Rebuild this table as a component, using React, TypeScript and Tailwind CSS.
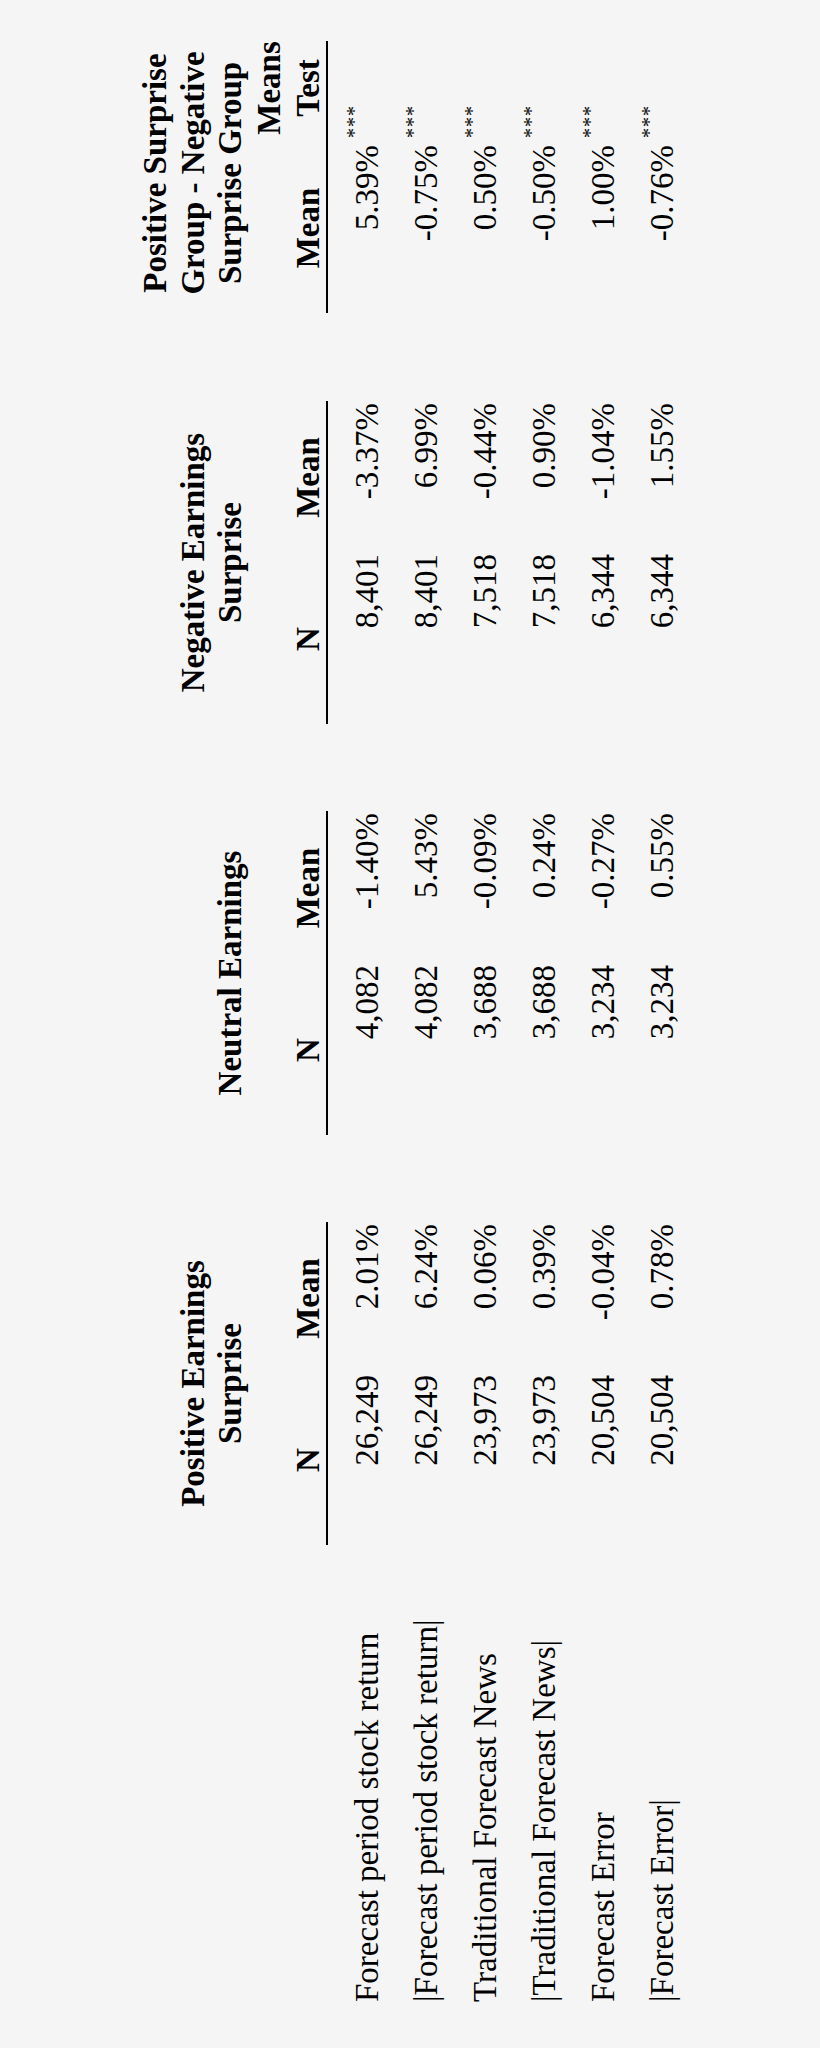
const COLS = 'grid grid-cols-[503px_170px_153px_87px_170px_154px_87px_170px_153px_88px_170px_102px]';

const rows = [
  { label: 'Forecast period stock return', pos: ['26,249', '2.01%'], neu: ['4,082', '-1.40%'], neg: ['8,401', '-3.37%'], diff: '5.39%' },
  { label: '|Forecast period stock return|', pos: ['26,249', '6.24%'], neu: ['4,082', '5.43%'], neg: ['8,401', '6.99%'], diff: '-0.75%' },
  { label: 'Traditional Forecast News', pos: ['23,973', '0.06%'], neu: ['3,688', '-0.09%'], neg: ['7,518', '-0.44%'], diff: '0.50%' },
  { label: '|Traditional Forecast News|', pos: ['23,973', '0.39%'], neu: ['3,688', '0.24%'], neg: ['7,518', '0.90%'], diff: '-0.50%' },
  { label: 'Forecast Error', pos: ['20,504', '-0.04%'], neu: ['3,234', '-0.27%'], neg: ['6,344', '-1.04%'], diff: '1.00%' },
  { label: '|Forecast Error|', pos: ['20,504', '0.78%'], neu: ['3,234', '0.55%'], neg: ['6,344', '1.55%'], diff: '-0.76%' },
];

const Header = () => (
  <div className={`${COLS} grid-rows-[37.5px_37px_39.5px_38.5px_37.5px_2px] font-bold leading-[38px]`}>
    <div className="col-start-2 col-span-2 row-start-2 text-center whitespace-nowrap">Positive Earnings</div>
    <div className="col-start-2 col-span-2 row-start-3 text-center">Surprise</div>
    <div className="col-start-2 row-start-5 text-center">N</div>
    <div className="col-start-3 row-start-5 text-center">Mean</div>
    <div className="col-start-2 col-span-2 row-start-6 bg-black" />

    <div className="col-start-5 col-span-2 row-start-3 text-center whitespace-nowrap">Neutral Earnings</div>
    <div className="col-start-5 row-start-5 text-center">N</div>
    <div className="col-start-6 row-start-5 text-center">Mean</div>
    <div className="col-start-5 col-span-2 row-start-6 bg-black" />

    <div className="col-start-8 col-span-2 row-start-2 text-center whitespace-nowrap">Negative Earnings</div>
    <div className="col-start-8 col-span-2 row-start-3 text-center">Surprise</div>
    <div className="col-start-8 row-start-5 text-center">N</div>
    <div className="col-start-9 row-start-5 text-center">Mean</div>
    <div className="col-start-8 col-span-2 row-start-6 bg-black" />

    <div className="col-start-11 col-span-2 row-start-1 text-center whitespace-nowrap pl-[8px]">Positive Surprise</div>
    <div className="col-start-11 col-span-2 row-start-2 text-center whitespace-nowrap pl-[8px]">Group - Negative</div>
    <div className="col-start-11 col-span-2 row-start-3 text-center whitespace-nowrap pl-[8px]">Surprise Group</div>
    <div className="col-start-12 row-start-4 text-center pl-[8px]">Means</div>
    <div className="col-start-12 row-start-5 text-center pl-[8px]">Test</div>
    <div className="col-start-11 row-start-5 text-center">Mean</div>
    <div className="col-start-11 col-span-2 row-start-6 bg-black" />
  </div>
);

const Row = ({ r }: { r: (typeof rows)[number] }) => (
  <div className={`${COLS} h-[59px] leading-[59px]`}>
    <div className="pl-[46px] whitespace-nowrap">{r.label}</div>
    <div className="text-right">{r.pos[0]}</div>
    <div className="text-right pr-[2px]">{r.pos[1]}</div>
    <div />
    <div className="text-right">{r.neu[0]}</div>
    <div className="text-right pr-[2px]">{r.neu[1]}</div>
    <div />
    <div className="text-right">{r.neg[0]}</div>
    <div className="text-right pr-[2px]">{r.neg[1]}</div>
    <div />
    <div className="text-right pr-[2px]">{r.diff}</div>
    <div className="pl-[5px] pt-[6px] text-[20px] leading-[20px] tracking-[1px]">***</div>
  </div>
);

export default function App() {
  return (
    <div className="w-[820px] h-[2048px] overflow-hidden bg-[#f5f5f5]">
      <div className="w-[2048px] h-[820px] origin-top-left [transform:translateY(2048px)_rotate(-90deg)] pt-[136px] text-[33px] text-black font-['Liberation_Serif','Times_New_Roman',serif]">
        <Header />
        <div className="mt-[9.5px]">
          {rows.map((r) => (
            <Row key={r.label} r={r} />
          ))}
        </div>
      </div>
    </div>
  );
}
